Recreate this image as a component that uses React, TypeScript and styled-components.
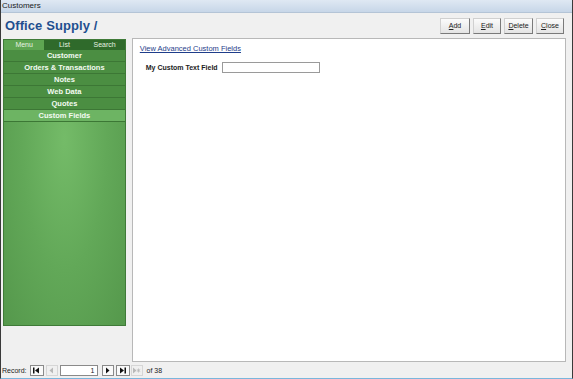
import React from "react";
import styled, { createGlobalStyle } from "styled-components";

const GlobalStyle = createGlobalStyle`
  html, body {
    margin: 0;
    padding: 0;
    background: #f0f0f0;
    font-family: "Liberation Sans", Arial, sans-serif;
  }
  * { box-sizing: border-box; }
`;

const Window = styled.div`
  width: 573px;
  height: 379px;
  display: flex;
  flex-direction: column;
  background: #f0f0f0;
  border-left: 1px solid #3a3a3a;
  border-right: 1px solid #3a3a3a;
  border-bottom: 1px solid #7ab6dc;
  overflow: hidden;
`;

const TitleBar = styled.div`
  height: 13px;
  line-height: 12px;
  padding-left: 1px;
  font-size: 8px;
  color: #1a1a1a;
  background: linear-gradient(#dfe8f3, #c7d6e8);
  border-bottom: 1px solid #b4c4d6;
`;

const Header = styled.div`
  height: 25px;
  display: flex;
  align-items: center;
  justify-content: space-between;
  padding: 0 8px 0 4px;
`;

const FormTitle = styled.h1`
  margin: 0;
  font-size: 13px;
  font-weight: bold;
  color: #1f4f8f;
  letter-spacing: 0.1px;
`;

const ButtonGroup = styled.div`
  display: flex;
  gap: 3px;
`;

const ActionButton = styled.button<{ $w: number }>`
  width: ${(p) => p.$w}px;
  height: 16px;
  padding: 0;
  font-family: "Liberation Sans", Arial, sans-serif;
  font-size: 7px;
  color: #222;
  background: linear-gradient(#fbfbfb, #e4e4e4);
  border: 1px solid #d0d0d0;
  border-right-color: #7a7a7a;
  border-bottom-color: #7a7a7a;
  u { text-decoration: underline; }
`;

const Main = styled.div`
  flex: 1;
  display: flex;
  padding: 0 6px 0 2px;
  gap: 6px;
`;

const SidePanel = styled.div`
  width: 123px;
  height: 287px;
  margin-top: 1px;
  display: flex;
  flex-direction: column;
  border: 1px solid #3f7a38;
  background: radial-gradient(ellipse at 50% 35%, #74bb68 0%, #62a858 50%, #55984c 100%);
`;

const Tabs = styled.div`
  display: flex;
  height: 10px;
`;

const Tab = styled.div<{ $active?: boolean }>`
  flex: 1;
  text-align: center;
  font-size: 7px;
  line-height: 10px;
  color: #e6f2e2;
  background: ${(p) => (p.$active ? "#5ea552" : "#2f6a2b")};
`;

const NavItem = styled.div<{ $active?: boolean }>`
  height: 12px;
  line-height: 11px;
  text-align: center;
  font-size: 7.5px;
  font-weight: bold;
  color: #f4fbf2;
  background: ${(p) => (p.$active ? "#6db463" : "#4b8e42")};
  border-bottom: 1px solid #3c7735;
`;

const ContentPanel = styled.div`
  width: 435px;
  height: 324px;
  background: #ffffff;
  border: 1px solid #b8b8b8;
  padding: 5px 7px;
`;

const AdvLink = styled.a`
  display: block;
  font-size: 7.5px;
  color: #1f3d8a;
  text-decoration: underline;
`;

const FieldRow = styled.div`
  display: flex;
  align-items: center;
  margin-top: 9px;
  padding-left: 6px;
`;

const FieldLabel = styled.label`
  width: 76px;
  font-size: 7px;
  font-weight: bold;
  color: #222;
`;

const FieldInput = styled.div`
  width: 98px;
  height: 11px;
  border: 1px solid #9a9a9a;
  background: #fff;
`;

const Footer = styled.div`
  height: 16px;
  display: flex;
  align-items: center;
  padding-left: 1px;
  font-size: 7px;
  color: #222;
`;

const NavBtn = styled.div<{ $disabled?: boolean; $w: number; $gap: number }>`
  width: ${(p) => p.$w}px;
  height: 11px;
  display: flex;
  align-items: center;
  justify-content: center;
  background: ${(p) => (p.$disabled ? "#f0f0f0" : "#fafafa")};
  border: 1px solid ${(p) => (p.$disabled ? "#d6d6d6" : "#8a8a8a")};
  margin-right: ${(p) => p.$gap}px;
  color: ${(p) => (p.$disabled ? "#b8b8b8" : "#111")};
`;

const RecordInput = styled.div`
  width: 38px;
  height: 11px;
  border: 1px solid #8a8a8a;
  background: #fff;
  text-align: right;
  font-size: 7px;
  line-height: 9px;
  padding-right: 2px;
  margin-right: 4px;
`;

const RecordLabel = styled.span`
  margin-right: 3px;
`;

const OfText = styled.span`
  margin-left: 4px;
`;

type Glyph = "first" | "prev" | "next" | "last" | "new";

function NavGlyph({ kind }: { kind: Glyph }) {
  const c = "currentColor";
  return (
    <svg width="9" height="7" viewBox="0 0 9 7">
      {kind === "first" && (
        <>
          <rect x="1" y="0.5" width="1.5" height="6" fill={c} />
          <polygon points="7,0.5 3,3.5 7,6.5" fill={c} />
        </>
      )}
      {kind === "prev" && <polygon points="6,0.5 2.5,3.5 6,6.5" fill={c} />}
      {kind === "next" && <polygon points="3,0.5 6.5,3.5 3,6.5" fill={c} />}
      {kind === "last" && (
        <>
          <polygon points="2,0.5 6,3.5 2,6.5" fill={c} />
          <rect x="6.5" y="0.5" width="1.5" height="6" fill={c} />
        </>
      )}
      {kind === "new" && (
        <>
          <polygon points="1,0.5 4.5,3.5 1,6.5" fill={c} />
          <path d="M6.5 1.5v4M4.8 2.5l3.4 2M4.8 4.5l3.4-2" stroke={c} strokeWidth="0.8" />
        </>
      )}
    </svg>
  );
}

const navItems = ["Customer", "Orders & Transactions", "Notes", "Web Data", "Quotes", "Custom Fields"];

export default function App() {
  return (
    <>
      <GlobalStyle />
      <Window>
        <TitleBar>Customers</TitleBar>
        <Header>
          <FormTitle>Office Supply /</FormTitle>
          <ButtonGroup>
            <ActionButton $w={30}><u>A</u>dd</ActionButton>
            <ActionButton $w={28}><u>E</u>dit</ActionButton>
            <ActionButton $w={29}><u>D</u>elete</ActionButton>
            <ActionButton $w={28}><u>C</u>lose</ActionButton>
          </ButtonGroup>
        </Header>
        <Main>
          <SidePanel>
            <Tabs>
              <Tab $active>Menu</Tab>
              <Tab>List</Tab>
              <Tab>Search</Tab>
            </Tabs>
            {navItems.map((n) => (
              <NavItem key={n} $active={n === "Custom Fields"}>
                {n}
              </NavItem>
            ))}
          </SidePanel>
          <ContentPanel>
            <AdvLink href="#">View Advanced Custom Fields</AdvLink>
            <FieldRow>
              <FieldLabel>My Custom Text Field</FieldLabel>
              <FieldInput />
            </FieldRow>
          </ContentPanel>
        </Main>
        <Footer>
          <RecordLabel>Record:</RecordLabel>
          <NavBtn $w={14} $gap={2}><NavGlyph kind="first" /></NavBtn>
          <NavBtn $w={12} $gap={2} $disabled><NavGlyph kind="prev" /></NavBtn>
          <RecordInput>1</RecordInput>
          <NavBtn $w={12} $gap={2}><NavGlyph kind="next" /></NavBtn>
          <NavBtn $w={14} $gap={1}><NavGlyph kind="last" /></NavBtn>
          <NavBtn $w={12} $gap={0} $disabled><NavGlyph kind="new" /></NavBtn>
          <OfText>of 38</OfText>
        </Footer>
      </Window>
    </>
  );
}
